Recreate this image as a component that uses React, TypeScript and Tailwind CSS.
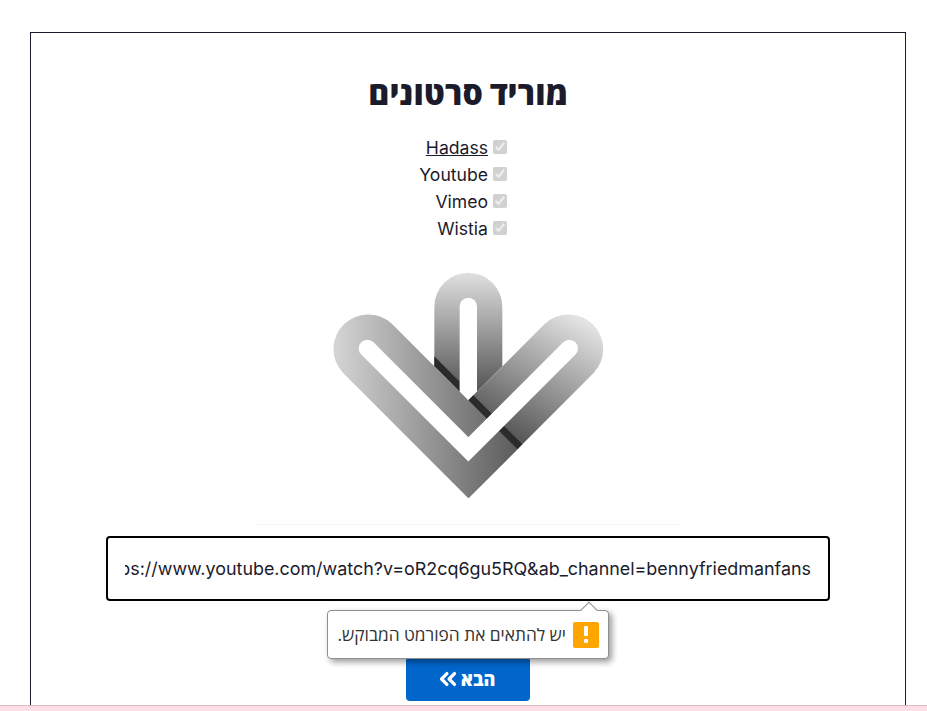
import { ChevronsLeft } from 'lucide-react'

const sources = ['Hadass', 'Youtube', 'Vimeo', 'Wistia']
const font = 'font-["Inter","Open_Sans","Liberation_Sans",sans-serif]'

function Logo() {
  return (
    <svg width="424" height="275" viewBox="18 0 1272 825">
      <defs>
        <linearGradient id="stem" gradientUnits="userSpaceOnUse" x1="655" y1="68" x2="655" y2="450">
          <stop offset="0" stopColor="#e0e0e0" />
          <stop offset="1" stopColor="#4a4a4a" />
        </linearGradient>
        <linearGradient id="right" gradientUnits="userSpaceOnUse" x1="990" y1="210" x2="770" y2="600">
          <stop offset="0" stopColor="#e2e2e2" />
          <stop offset="1" stopColor="#484848" />
        </linearGradient>
        <linearGradient id="left" gradientUnits="userSpaceOnUse" x1="250" y1="400" x2="800" y2="400">
          <stop offset="0" stopColor="#d5d5d5" />
          <stop offset="1" stopColor="#5c5c5c" />
        </linearGradient>
      </defs>
      <path d="M553 170A102 102 0 0 1 757 170V349L655 451L553 349Z" fill="url(#stem)" />
      <path d="M553 319L629 395V425L553 349Z" fill="#2b2b2b" />
      <path d="M629 169A26 26 0 0 1 681 169V426L655 452L629 426Z" fill="#fff" />
      <path d="M655 451L884.5 221.5A104 104 0 0 1 1031.5 368.5L655 745Z" fill="url(#right)" />
      <path d="M670 436L817 583L802 598L655 451Z" fill="#2b2b2b" />
      <path d="M425.5 221.5L802 598L655 745L278.5 368.5A104 104 0 0 1 425.5 221.5Z" fill="url(#left)" />
      <path d="M352 295L655 598L958 295" fill="none" stroke="#fff" strokeWidth="52" strokeLinecap="round" strokeLinejoin="miter" />
    </svg>
  )
}

export default function App() {
  return (
    <div className={`h-[711px] overflow-hidden bg-white flex flex-col text-[#1b1b2b] ${font}`}>
      <div className="flex-1 min-h-0 mt-[32px] ml-[30px] w-[876px] border-x border-t border-[#1b1b2b] flex flex-col items-center pt-[38px]">
        <h1 dir="rtl" className="text-[32px] font-extrabold leading-[46px]">מוריד סרטונים</h1>
        <div className="mt-[17px] flex flex-col items-center">
          {sources.map(name => (
            <label key={name} className="h-[27px] w-[78px] flex items-center justify-end gap-[5px] text-[17.6px] leading-[27px] whitespace-nowrap">
              <span className={name === 'Hadass' ? 'underline' : ''}>{name}</span>
              <input type="checkbox" checked disabled readOnly className="w-[14px] h-[14px] m-0 shrink-0 -translate-y-[1px]" />
            </label>
          ))}
        </div>
        <div className="mt-[8px] w-[424px] h-[275px] border-b border-[#f6f6f6] overflow-hidden">
          <Logo />
        </div>
        <div className="relative mt-[11px] w-[724px]">
          <input
            dir="rtl"
            readOnly
            value="https://www.youtube.com/watch?v=oR2cq6gu5RQ&ab_channel=bennyfriedmanfans"
            className="block w-full h-[65px] px-[17px] border-2 border-black rounded-[4px] text-[17.9px] outline-none text-[#1b1b2b]"
          />
          <div dir="rtl" className="absolute left-[221px] top-[74px] z-10 w-[282px] h-[49px] bg-white border border-[#8f8f8f] rounded-[4px] shadow-[3px_3px_6px_rgba(0,0,0,0.4)] flex items-center gap-[7px] pr-[9px] font-['Open_Sans','Liberation_Sans',sans-serif] text-[17.3px] text-[#333]">
            <div className="absolute -top-[7px] left-[255px] w-[12px] h-[12px] rotate-45 bg-white border-l border-t border-[#8f8f8f]" />
            <div className="w-[26px] h-[26px] shrink-0 rounded-[2px] bg-[#ffa500] flex flex-col items-center justify-center gap-[3px]">
              <span className="block w-[4px] h-[10px] rounded-[1px] bg-white" />
              <span className="block w-[4px] h-[4px] rounded-[1px] bg-white" />
            </div>
            <span className="whitespace-nowrap">יש להתאים את הפורמט המבוקש.</span>
          </div>
        </div>
        <button dir="rtl" className="mt-[56px] w-[124px] h-[44px] shrink-0 bg-[#0066cc] rounded-[4px] text-white font-extrabold text-[18px] flex items-center justify-center pr-[6px]">
          הבא
          <ChevronsLeft size={26} strokeWidth={3} />
        </button>
      </div>
      <div className="h-[6px] bg-[#ffdde4] border-t border-[#dcbcc4]" />
    </div>
  )
}
